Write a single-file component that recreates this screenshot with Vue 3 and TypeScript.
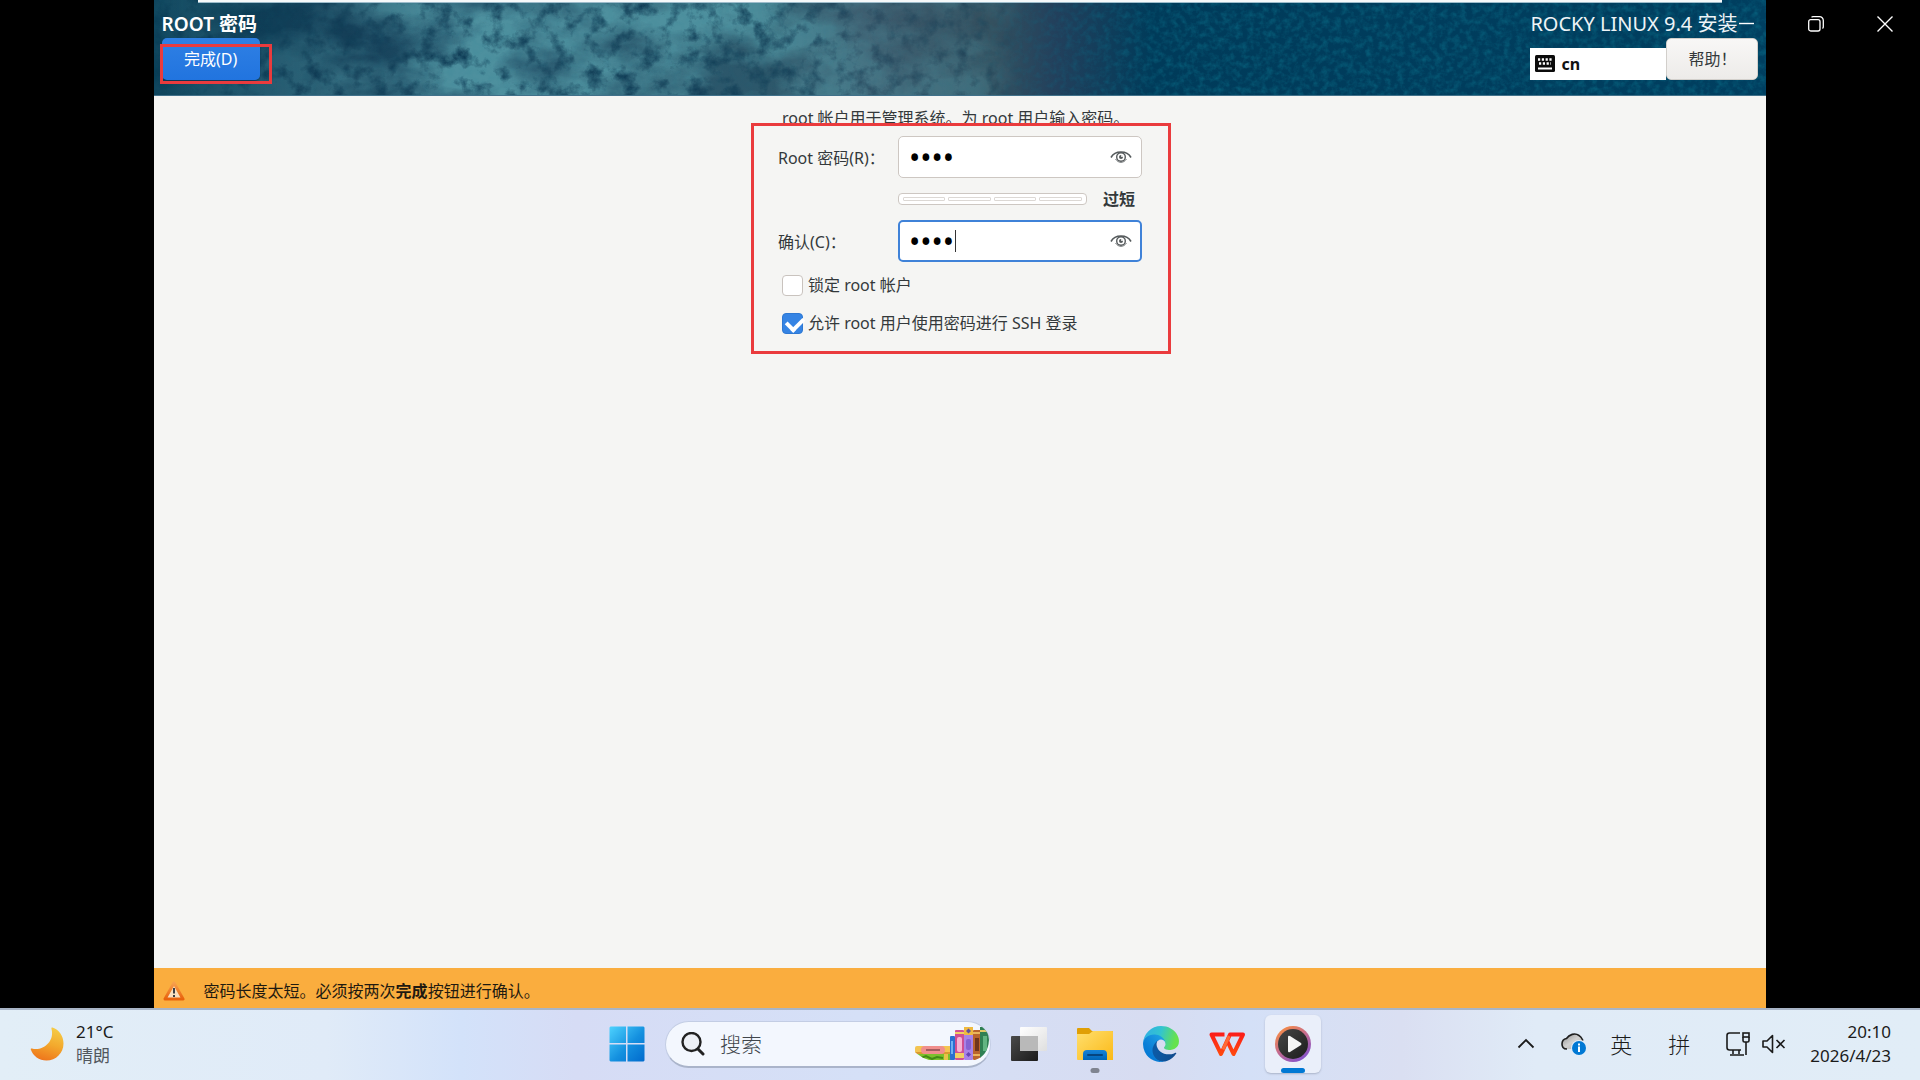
<script setup lang="ts">
import { ref } from 'vue'

const rootPassword = ref('root')
const confirmPassword = ref('root')
const lockRoot = ref(false)
const allowSsh = ref(true)
const strengthLevels = [1, 2, 3, 4]
</script>

<template>
  <div class="desktop">
    <main class="stage">
      <header class="banner">
        <svg class="texture" width="100%" height="100%" aria-hidden="true">
          <defs>
            <filter id="rock" x="0" y="0" width="100%" height="100%" color-interpolation-filters="sRGB">
              <feTurbulence type="fractalNoise" baseFrequency="0.011 0.018" numOctaves="7" seed="11" />
              <feColorMatrix values="0 0 0 0 0.33  0 0 0 0 0.6  0 0 0 0 0.65  2.6 0 0 0 -0.72" />
            </filter>
            <filter id="grain" x="0" y="0" width="100%" height="100%" color-interpolation-filters="sRGB">
              <feTurbulence type="fractalNoise" baseFrequency="0.16" numOctaves="3" seed="4" />
              <feColorMatrix values="0 0 0 0 0.04  0 0 0 0 0.45  0 0 0 0 0.55  0 1.8 0 0 -0.7" />
            </filter>
            <filter id="shade" x="0" y="0" width="100%" height="100%" color-interpolation-filters="sRGB">
              <feTurbulence type="fractalNoise" baseFrequency="0.06" numOctaves="5" seed="23" />
              <feColorMatrix values="0 0 0 0 0.05  0 0 0 0 0.22  0 0 0 0 0.32  0 0 2.6 0 -1.25" />
            </filter>
            <linearGradient id="rockFade">
              <stop offset="0" stop-color="#222" />
              <stop offset=".1" stop-color="#666" />
              <stop offset=".18" stop-color="#ddd" />
              <stop offset=".36" stop-color="#ddd" />
              <stop offset=".44" stop-color="#777" />
              <stop offset=".51" stop-color="#666" />
              <stop offset=".54" stop-color="#000" />
            </linearGradient>
            <linearGradient id="grainFade">
              <stop offset=".5" stop-color="#111" />
              <stop offset=".64" stop-color="#999" />
              <stop offset="1" stop-color="#999" />
            </linearGradient>
            <mask id="rockMask"><rect width="100%" height="100%" fill="url(#rockFade)" /></mask>
            <mask id="grainMask"><rect width="100%" height="100%" fill="url(#grainFade)" /></mask>
          </defs>
          <g mask="url(#rockMask)">
            <rect width="100%" height="100%" filter="url(#rock)" />
            <rect width="100%" height="100%" filter="url(#shade)" />
          </g>
          <g mask="url(#grainMask)"><rect width="100%" height="100%" filter="url(#grain)" /></g>
        </svg>
        <span class="strip"></span>
        <div class="banner-left">
          <h1>ROOT 密码</h1>
          <button type="button" class="done">完成(D)</button>
          <span class="mark mark-done"></span>
        </div>
        <div class="banner-right">
          <div class="product">ROCKY LINUX 9.4 安装</div>
          <div class="tools">
            <div class="layout">
              <svg width="20" height="18" viewBox="0 0 20 18" aria-hidden="true">
                <rect width="20" height="17" rx="1.5" fill="#0b0b0b" />
                <path d="M3 4.5h14" stroke="#fff" stroke-width="2.4" stroke-dasharray="2.2 1.6" />
                <path d="M4 8.5h12" stroke="#fff" stroke-width="2.4" stroke-dasharray="2.2 1.6" />
                <path d="M3 13.5h14" stroke="#fff" stroke-width="2" />
              </svg>
              <b>cn</b>
            </div>
            <button type="button" class="help">帮助！</button>
          </div>
        </div>
      </header>

      <section class="content">
        <form class="form" @submit.prevent>
          <p class="intro">root 帐户用于管理系统。为 root 用户输入密码。</p>
          <div class="fields">
            <label for="pw">Root 密码(R)：</label>
            <div class="entry">
              <input id="pw" v-model="rootPassword" type="password" />
              <button type="button" class="eye" aria-label="显示密码">
                <svg width="22" height="14" viewBox="0 0 22 14" fill="none" stroke="#555a5c">
                  <path d="M1 7.5C5 .2 17 .2 21 7.5" stroke-width="1.6" />
                  <path d="M5.500 9c3 4.500 8 4.500 11 0" stroke-width=".8" />
                  <circle cx="11" cy="7" r="4.300" stroke-width="1.400" />
                  <circle cx="11" cy="7" r="2" fill="#555a5c" stroke="none" />
                  <circle cx="12" cy="6" r="1" fill="#fff" stroke="none" />
                </svg>
              </button>
            </div>
            <div class="strength">
              <div class="meter"><i v-for="n in strengthLevels" :key="n"></i></div>
              <b>过短</b>
            </div>
            <label for="pw2">确认(C)：</label>
            <div class="entry">
              <input id="pw2" v-model="confirmPassword" class="focused" type="password" />
              <span class="caret"></span>
              <button type="button" class="eye" aria-label="显示密码">
                <svg width="22" height="14" viewBox="0 0 22 14" fill="none" stroke="#555a5c">
                  <path d="M1 7.5C5 .2 17 .2 21 7.5" stroke-width="1.6" />
                  <path d="M5.500 9c3 4.500 8 4.500 11 0" stroke-width=".8" />
                  <circle cx="11" cy="7" r="4.300" stroke-width="1.400" />
                  <circle cx="11" cy="7" r="2" fill="#555a5c" stroke="none" />
                  <circle cx="12" cy="6" r="1" fill="#fff" stroke="none" />
                </svg>
              </button>
            </div>
          </div>
          <label class="check"><input v-model="lockRoot" type="checkbox" />锁定 root 帐户</label>
          <label class="check"><input v-model="allowSsh" type="checkbox" />允许 root 用户使用密码进行 SSH 登录</label>
          <span class="mark mark-form"></span>
        </form>
      </section>

      <footer class="warning">
        <svg width="22" height="20" viewBox="0 0 22 20" aria-hidden="true">
          <defs>
            <linearGradient id="warn" x2="0" y2="1"><stop stop-color="#f7a04c" /><stop offset="1" stop-color="#e8620c" /></linearGradient>
          </defs>
          <path d="M11 2 20 18H2z" fill="#f9dfc0" stroke="url(#warn)" stroke-width="3" stroke-linejoin="round" />
          <path d="M11 7v5.500M11 14v2" stroke="#3b3f44" stroke-width="2" />
        </svg>
        <span>密码长度太短。必须按两次<b>完成</b>按钮进行确认。</span>
      </footer>
    </main>

    <div class="window-controls">
      <button type="button" aria-label="最小化"><svg width="16" height="16"><path d="M0 7.500h15" stroke="#fff" stroke-width="1.400" /></svg></button>
      <button type="button" aria-label="还原">
        <svg width="16" height="16" fill="none" stroke="#fff" stroke-width="1.300">
          <rect x=".7" y="3.700" width="11.300" height="11.300" rx="2" />
          <path d="M3.500 1.200Q4.200.7 5 .7h6.500a3.800 3.800 0 0 1 3.800 3.800V11q0 .8-.8 1.500" />
        </svg>
      </button>
      <button type="button" aria-label="关闭"><svg width="16" height="16"><path d="M.5.500l15 15M15.500.500l-15 15" stroke="#fff" stroke-width="1.400" /></svg></button>
    </div>

    <nav class="taskbar">
      <div class="weather">
        <svg width="34" height="34" viewBox="0 0 34 34" aria-hidden="true">
          <defs><linearGradient id="moon" x1=".7" y1="0" x2=".4" y2="1"><stop stop-color="#f5cc48" /><stop offset=".5" stop-color="#f3a92d" /><stop offset="1" stop-color="#ee761c" /></linearGradient></defs>
          <path d="M22.500.500C29 2.500 33.500 9 33.500 16.500 33.500 26 26 33.500 16.500 33.500 9 33.500 3 29 .8 22.500c-.3-1 .4-1.200 1.200-1C12 24.500 25 15 21.500 2c-.3-1.200 0-1.700 1-1.500z" fill="url(#moon)" />
        </svg>
        <div><div>21°C</div><div class="sky">晴朗</div></div>
      </div>

      <div class="apps">
        <button type="button" class="app" aria-label="开始">
          <svg width="36" height="36" viewBox="0 0 36 36">
            <defs><linearGradient id="win" gradientUnits="userSpaceOnUse" x1="0" y1="0" x2="36" y2="36"><stop stop-color="#4fd4ff" /><stop offset=".55" stop-color="#1490df" /><stop offset="1" stop-color="#0069cc" /></linearGradient></defs>
            <path d="M1.500.500H17V17H.5V1.500zM18.500.500H34.500l1 1V17h-17zM.5 18.500H17v17H1.500l-1-1zM18.500 18.500h17v16l-1 1h-16z" fill="url(#win)" />
          </svg>
        </button>
        <label class="search">
          <svg width="24" height="24" viewBox="0 0 24 24" fill="none" stroke="#222" stroke-width="2.400" stroke-linecap="round">
            <circle cx="10.500" cy="10" r="9" fill="#edf0f6" /><path d="M17 17l5 5" stroke-width="3" />
          </svg>
          <input type="text" placeholder="搜索" aria-label="搜索" />
          <svg width="74" height="36" viewBox="0 0 74 36" aria-hidden="true">
            <defs><clipPath id="pill"><path d="M0 0H66Q74 6 74 14 73 30 60 34H14Q5 31 0 26z" /></clipPath></defs>
            <g clip-path="url(#pill)">
              <rect y="20" width="38" height="8" rx="2" fill="#f3c452" /><rect y="26" width="36" height="2" fill="#d9992f" />
              <rect x="6" y="20" width="24" height="8" rx="4" fill="#f08f8d" /><rect x="11" y="23" width="14" height="2" fill="#a55b5e" />
              <rect x="2" y="28" width="34" height="6" fill="#7cc02c" /><path d="M6 32l5-2 6 3 5-2 6 1" stroke="#438a16" stroke-width="2" fill="none" /><rect x="29" y="28" width="4" height="6" fill="#e6c447" />
              <rect x="35" y="10" width="5" height="24" rx="1" fill="#2a6fd0" /><rect x="36" y="15" width="2" height="13" fill="#6fb0f5" />
              <rect x="40" y="4" width="9" height="30" rx="1" fill="#cf4f92" /><rect x="42" y="11" width="5" height="15" rx="2" fill="#f7b3d4" /><rect x="40" y="6" width="9" height="2" fill="#f1cf64" /><rect x="40" y="27" width="9" height="5" fill="#f1cf64" />
              <rect x="49" y="1" width="9" height="33" rx="1" fill="#a883e6" /><rect x="49" y="1" width="9" height="8" fill="#efba3f" /><path d="M53.500 2.500l2.500 2.500-2.500 2.500L51 5z" fill="#5d4fa0" /><rect x="51" y="13" width="5" height="11" rx="2" fill="#8562d2" /><path d="M53.500 26l2.500 2.500-2.500 2.500-2.500-2.500z" fill="#6544b4" />
              <rect x="58" y="4" width="8" height="30" rx="1" fill="#ba642c" /><rect x="60" y="12" width="4" height="13" fill="#71351b" /><rect x="58" y="6" width="8" height="2" fill="#eab45c" /><rect x="58" y="28" width="8" height="2" fill="#eab45c" />
              <rect x="65" y="1" width="9" height="33" fill="#2f8053" /><rect x="68" y="10" width="4" height="15" fill="#62b582" /><rect x="65" y="4" width="9" height="2" fill="#dfc966" />
            </g>
          </svg>
        </label>
        <button type="button" class="app" aria-label="任务视图">
          <svg width="36" height="36" viewBox="0 0 36 36">
            <defs>
              <linearGradient id="tv" x2="1" y2="1"><stop stop-color="#4a4a4a" /><stop offset="1" stop-color="#1b1b1b" /></linearGradient>
              <linearGradient id="tv2" x2="1" y2="1"><stop stop-color="#fff" /><stop offset="1" stop-color="#dfdfdf" /></linearGradient>
            </defs>
            <rect x="9" y="1" width="27" height="24" rx="1" fill="url(#tv2)" />
            <rect y="10" width="27" height="25" rx="1" fill="url(#tv)" />
            <path d="M9 10h18v15H9z" fill="#b9b9b9" />
          </svg>
        </button>
        <button type="button" class="app running" aria-label="文件资源管理器">
          <svg width="36" height="36" viewBox="0 0 36 36">
            <defs><linearGradient id="fold" x2="1" y2="1"><stop stop-color="#ffdf6e" /><stop offset="1" stop-color="#fbb917" /></linearGradient><linearGradient id="foldb" x2="0" y2="1"><stop stop-color="#1683d8" /><stop offset="1" stop-color="#0066b8" /></linearGradient></defs>
            <path d="M0 3q0-1 1-1h11l3 3h20q1 0 1 1v6H0z" fill="#e09f05" />
            <path d="M0 8h12l4-3h19q1 0 1 1v28H1q-1 0-1-1z" fill="url(#fold)" />
            <path d="M6 34V28q0-4 4-4h16q4 0 4 4v6z" fill="url(#foldb)" /><path d="M11 29h14" stroke="#06457f" stroke-width="2" stroke-linecap="round" />
          </svg>
        </button>
        <button type="button" class="app" aria-label="Edge">
          <svg width="36" height="36" viewBox="0 0 256 256">
            <defs>
              <linearGradient id="e1" x1=".2" x2="1" y1=".7" y2=".7"><stop stop-color="#0c59a4" /><stop offset="1" stop-color="#114a8b" /></linearGradient>
              <linearGradient id="e2" x1=".9" y1=".3" x2=".3" y2="1"><stop stop-color="#1b9de2" /><stop offset=".6" stop-color="#0d80d8" /><stop offset="1" stop-color="#0078d4" /></linearGradient>
              <linearGradient id="e3" x1="0" y1=".4" x2="1" y2=".6"><stop stop-color="#2fb0e4" /><stop offset=".45" stop-color="#33c4cf" /><stop offset=".9" stop-color="#66e24d" /></linearGradient>
            </defs>
            <path fill="url(#e1)" d="M231 190.5c-3.4 1.8-6.9 3.4-10.500 4.7a101.700 101.700 0 0 1-35.900 6.400c-47.300 0-88.500-32.500-88.500-74.300a31.500 31.500 0 0 1 16.400-27.300c-42.800 1.800-53.800 46.400-53.800 72.500 0 74 68.100 81.400 82.800 81.400 7.900 0 19.800-2.300 27-4.600l1.300-.4a128.300 128.300 0 0 0 66.600-52.800 4 4 0 0 0-5.400-5.600z" />
            <path fill="url(#e2)" d="M105.700 241.400a79.200 79.200 0 0 1-22.700-21.300 80.700 80.700 0 0 1 29.500-120c3.200-1.500 8.500-4.100 15.600-4a32.400 32.400 0 0 1 25.700 13 31.900 31.900 0 0 1 6.300 18.700c0-.2 24.500-79.600-80-79.600-43.900 0-80 41.700-80 78.200a130.200 130.200 0 0 0 12.100 56 128 128 0 0 0 156.400 67.100 75.600 75.600 0 0 1-62.800-8z" />
            <path fill="url(#e3)" d="M152.300 148.900c-.9 1-3.400 2.500-3.400 5.600 0 2.600 1.700 5.200 4.800 7.300 14.300 10 41.400 8.600 41.500 8.600 10.700 0 21.100-2.900 30.300-8.300a61.400 61.400 0 0 0 30.400-53c.3-22.400-8-37.300-11.300-43.900C223.500 23.900 177.700 0 128 0A128 128 0 0 0 0 126.200c.5-36.500 36.800-66 80-66 3.500 0 23.500.3 42 10.100 16.300 8.600 24.900 18.900 30.800 29.200 6.200 10.700 7.300 24.100 7.300 29.500 0 5.300-2.700 13.300-7.800 19.900z" />
          </svg>
        </button>
        <button type="button" class="app" aria-label="WPS">
          <svg width="36" height="36" viewBox="0 0 36 36" fill="none" stroke-width="4" stroke-linejoin="round">
            <defs><linearGradient id="wps" gradientUnits="userSpaceOnUse" x1="0" y1="6" x2="0" y2="30"><stop stop-color="#fb1a1a" /><stop offset="1" stop-color="#ff4c0e" /></linearGradient></defs>
            <path d="M15.500 8.500H2.500L12 28l9-19.500h5" stroke="url(#wps)" />
            <path d="M26 8.500h8L24.500 28 18 14.500" stroke="url(#wps)" />
            <path d="M14 23.500 20.200 10" stroke="#ff6a35" stroke-width="3" />
          </svg>
        </button>
        <button type="button" class="app active" aria-label="媒体播放器">
          <svg width="36" height="36" viewBox="0 0 36 36">
            <defs>
              <linearGradient id="ring" x1=".1" x2=".8" y2="1"><stop stop-color="#ff9138" /><stop offset=".5" stop-color="#c46a90" /><stop offset="1" stop-color="#7d4fd0" /></linearGradient>
              <linearGradient id="disc" x2="1" y2="1"><stop stop-color="#454545" /><stop offset="1" stop-color="#1c1c1c" /></linearGradient>
            </defs>
            <circle cx="18" cy="18" r="18" fill="url(#ring)" /><circle cx="18" cy="18" r="15" fill="url(#disc)" />
            <path d="M13 11q0-2 2-1l11 7q1 1 0 2l-11 7q-2 1-2-1z" fill="#f5f5f5" />
          </svg>
        </button>
      </div>

      <div class="tray">
        <svg class="chevron" width="18" height="12" viewBox="0 0 18 12"><path d="M1.500 9.500 9 2l7.500 7.500" fill="none" stroke="#1b1b1b" stroke-width="1.800" /></svg>
        <svg class="cloud" width="26" height="24" viewBox="0 0 26 24">
          <defs><linearGradient id="cl" x2="1" y2="1"><stop stop-color="#8d8d8d" /><stop offset=".5" stop-color="#d2d2d2" /><stop offset="1" stop-color="#a8a8a8" /></linearGradient></defs>
          <path d="M6 17C2 17 1 14.500 1 12c0-3 2-5 4.500-5.500C8 2.500 14 .5 18 3.500c2 1.500 3 3.500 4 5V17z" fill="url(#cl)" />
          <path d="M6 17C2 17 1 14.500 1 12c0-3 2-5 4.500-5.500C8 2.500 14 .5 18 3.500c2 1 3 3 4 5" fill="none" stroke="#1e1e1e" stroke-width="1.600" />
          <circle cx="18" cy="16" r="8" fill="#e2edf8" /><circle cx="18" cy="16" r="7" fill="#0078d4" />
          <path d="M18 14.500v5.500M18 11.500v2" stroke="#fff" stroke-width="2" />
        </svg>
        <span class="ime">英</span>
        <span class="ime">拼</span>
        <svg class="net" width="26" height="26" viewBox="0 0 26 26" fill="none" stroke="#1b1b1b" stroke-width="1.600">
          <path d="M15 2H4.500Q2 2 2 4.500v12Q2 19 4.500 19h11.500M8 19v4M14 19v4M5 24h14" />
          <rect x="18" y="2" width="6" height="4" /><path d="M18 6v3.500q0 1.500 1.500 1.500h3Q24 11 24 9.500V6M21 11v13" />
        </svg>
        <svg class="vol" width="24" height="20" viewBox="0 0 24 20" fill="none" stroke="#1b1b1b" stroke-width="1.600">
          <path d="M1 7h4l5.500-5.500v17L5 13H1z" stroke-linejoin="round" /><path d="M14.500 6l8 8M22.500 6l-8 8" />
        </svg>
        <div class="clock"><div>20:10</div><div>2026/4/23</div></div>
      </div>
    </nav>
  </div>
</template>

<style>
body {
  margin: 0;
  background: #000;
}
</style>

<style scoped>
* {
  box-sizing: border-box;
}
.desktop {
  position: relative;
  display: flex;
  flex-direction: column;
  min-height: 100vh;
  background: #000;
  color: #34393b;
  font: 16px/24px "Noto Sans", "Noto Sans CJK SC", sans-serif;
}
button,
input {
  font: inherit;
  color: inherit;
}
button {
  display: flex;
  align-items: center;
  justify-content: center;
  padding: 0;
  border: 0;
  background: none;
}
.stage {
  display: flex;
  flex: 1;
  flex-direction: column;
  width: 84%;
  margin: 0 auto;
  background: #f5f5f3;
}
.banner {
  position: relative;
  display: flex;
  justify-content: space-between;
  height: 96px;
  padding: 12px 8px 0;
  border-bottom: 1px solid #41718a;
  background: linear-gradient(90deg, #083c55 0%, #153f58 12%, #24526a 20%, #2d586b 38%, #3a5366 44%, #34505f 52%, #22405c 56%, #003b5a 62%, #003f60 100%);
}
.texture {
  position: absolute;
  inset: 0;
}
.strip {
  position: absolute;
  top: 0;
  left: 44px;
  right: 44px;
  height: 3px;
  background: #f6f9fa;
  border-bottom: 1px solid #9dbccb;
}
.banner-left,
.banner-right {
  position: relative;
}
h1 {
  margin: 0 0 2px;
  color: #fff;
  font-size: 19px;
  line-height: 24px;
  font-weight: 600;
}
.done {
  width: 98px;
  height: 42px;
  border-radius: 5px;
  background: linear-gradient(#2f80e4, #2174df);
  box-shadow: 0 1px 2px #0b3155;
  color: #fff;
}
.mark {
  position: absolute;
  border: 3px solid #ea3b3d;
  pointer-events: none;
}
.mark-done {
  top: 32px;
  left: -2px;
  width: 112px;
  height: 40px;
}
.product {
  margin-bottom: 2px;
  color: #eef4f7;
  font-size: 20px;
  line-height: 24px;
}
.tools {
  display: flex;
  align-items: flex-end;
}
.layout {
  display: flex;
  align-items: center;
  gap: 6px;
  width: 136px;
  height: 32px;
  padding-left: 5px;
  background: #fff;
  color: #111;
}
.help {
  width: 92px;
  height: 42px;
  border: 1px solid #d2cfcb;
  border-radius: 5px;
  background: linear-gradient(#f8f7f6, #edebe9);
}
.content {
  flex: 1;
  padding-top: 10px;
}
.form {
  position: relative;
  width: 364px;
  margin: 0 auto;
}
.intro {
  margin: 0 0 6px;
  padding-left: 4px;
  white-space: nowrap;
}
.fields {
  display: grid;
  grid-template-columns: 120px 1fr;
  row-gap: 9px;
  align-items: center;
  margin-bottom: 4px;
}
.fields label {
  padding-top: 2px;
  white-space: nowrap;
}
.entry {
  position: relative;
}
.entry input {
  display: block;
  width: 100%;
  height: 42px;
  padding: 0 36px 0 10px;
  border: 1px solid #cdc7c2;
  border-radius: 5px;
  outline: none;
  background: #fff;
  color: #000;
  font-size: 30px;
}
.entry input.focused {
  border: 2px solid #3f82d8;
  padding-left: 9px;
}
.eye {
  position: absolute;
  top: 14px;
  right: 10px;
}
.caret {
  position: absolute;
  top: 10px;
  left: 57px;
  width: 1px;
  height: 22px;
  background: #333;
}
.strength {
  grid-column: 2;
  display: flex;
  align-items: center;
  gap: 16px;
  height: 24px;
}
.meter {
  display: flex;
  gap: 3px;
  width: 189px;
  height: 12px;
  padding: 3px 4px;
  border: 1px solid #cdc7c2;
  border-radius: 4px;
  background: #fff;
}
.meter i {
  flex: 1;
  border: 1px solid #dcd8d4;
  border-radius: 1px;
}
.check {
  display: flex;
  align-items: center;
  gap: 5px;
  height: 38px;
  padding-left: 4px;
  white-space: nowrap;
}
.check input {
  appearance: none;
  width: 21px;
  height: 21px;
  margin: 0;
  border: 1px solid #c9c3be;
  border-radius: 4px;
  background: #fff;
}
.check input:checked {
  border-color: #2e78d2;
  background: #3584e4;
}
.check input:checked::before {
  content: "";
  display: block;
  width: 8px;
  height: 13px;
  margin: 0 0 0 6px;
  border: solid #fff;
  border-width: 0 4px 4px 0;
  transform: rotate(45deg);
}
.mark-form {
  top: 17px;
  left: -27px;
  right: -29px;
  height: 231px;
}
.warning {
  display: flex;
  align-items: center;
  gap: 19px;
  height: 40px;
  padding: 6px 9px 0;
  background: #faad3e;
  color: #1f1a10;
}
.window-controls {
  position: absolute;
  top: 0;
  right: 1px;
  display: flex;
  height: 48px;
}
.window-controls button {
  width: 69px;
}
.taskbar {
  display: grid;
  grid-template-columns: 1fr auto 1fr;
  align-items: center;
  height: 72px;
  padding-bottom: 2px;
  border-top: 2px solid #a8b4c6;
  background: linear-gradient(90deg, #e2eef7 0%, #e0ebf8 17%, #d3e2fa 24%, #d6dcf5 30%, #d5e0f7 45%, #d7dcf1 60%, #d4e0f7 65%, #dadff2 73%, #e0ebf7 80%, #e1edf7 100%);
  color: #1b1b1b;
  font-size: 17px;
}
.weather {
  display: flex;
  align-items: center;
  gap: 12px;
  padding-left: 30px;
}
.sky {
  color: #51575e;
}
.apps {
  display: flex;
  align-items: center;
  gap: 10px;
}
.app {
  position: relative;
  width: 56px;
  height: 58px;
  border-radius: 6px;
}
.active {
  background: #eaeffa;
  box-shadow: 0 1px 2px #aab3c8;
}
.running::after,
.active::after {
  content: "";
  position: absolute;
  bottom: 0;
  left: 50%;
  width: 24px;
  height: 5px;
  border-radius: 3px;
  background: #0078d4;
  transform: translateX(-50%);
}
.running::after {
  width: 9px;
  background: #7f8490;
}
.search {
  display: flex;
  align-items: center;
  width: 326px;
  height: 47px;
  padding: 0 1px 0 15px;
  border: 1px solid #c3cde4;
  border-bottom: 2px solid #aab4ca;
  border-radius: 24px;
  background: #f3f7fe;
}
.search input {
  flex: 1;
  min-width: 0;
  padding: 0 0 0 15px;
  border: 0;
  outline: none;
  background: none;
  font-size: 21px;
  font-weight: 300;
}
.search input::placeholder {
  color: #41464c;
}
.tray {
  display: flex;
  align-items: center;
  justify-content: flex-end;
  padding-right: 29px;
}
.chevron {
  margin-right: 26px;
}
.cloud {
  margin-right: 22px;
}
.ime {
  width: 24px;
  margin-right: 34px;
  font-size: 22px;
  font-weight: 300;
  text-align: center;
}
.net {
  margin-right: 11px;
}
.vol {
  margin-right: 24px;
}
.clock {
  text-align: right;
}
</style>
